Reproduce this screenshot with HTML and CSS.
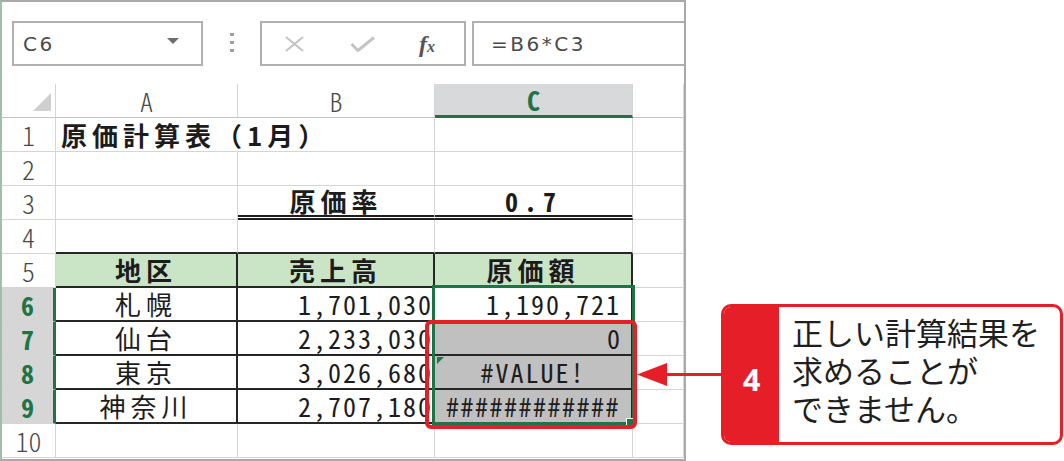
FILE: index.html
```html
<!DOCTYPE html>
<html lang="ja">
<head>
<meta charset="utf-8">
<title>原価計算表</title>
<link rel="stylesheet" href="styles.css">
</head>
<body>
<div class="page">
  <div class="sheet">
    <div class="fbar">
      <div class="namebox"><span class="ref">C6</span><span class="caret"></span></div>
      <div class="dots"><span></span><span></span><span></span></div>
      <div class="fbtns">
        <svg class="ico-x" width="21" height="16" viewBox="0 0 21 16"><path d="M2 1 L19 15 M19 1 L2 15" stroke="#c4c4c4" stroke-width="2.2" fill="none"/></svg>
        <svg class="ico-ok" width="25" height="16" viewBox="0 0 25 16"><path d="M1.5 8 L8 14.5 L24 1.5" stroke="#c4c4c4" stroke-width="3" fill="none"/></svg>
        <span class="fx">f<span class="fx-x">x</span></span>
      </div>
      <div class="finput">=B6*C3</div>
    </div>
    <div class="grid">
      <div class="c corner"><span class="tri"></span></div>
      <div class="c ch">A</div>
      <div class="c ch">B</div>
      <div class="c ch on">C</div>
      <div class="c ch"></div>

      <div class="c rh">1</div>
      <div class="c title">原価計算表（1月）</div>
      <div class="c"></div>
      <div class="c"></div>
      <div class="c"></div>

      <div class="c rh">2</div>
      <div class="c"></div>
      <div class="c"></div>
      <div class="c"></div>
      <div class="c"></div>

      <div class="c rh">3</div>
      <div class="c"></div>
      <div class="c dbl b ctr">原価率</div>
      <div class="c dbl b ctr n rate">0.7</div>
      <div class="c"></div>

      <div class="c rh">4</div>
      <div class="c tb"></div>
      <div class="c tb"></div>
      <div class="c tb"></div>
      <div class="c"></div>

      <div class="c rh">5</div>
      <div class="c t hd">地区</div>
      <div class="c t hd">売上高</div>
      <div class="c t hd">原価額</div>
      <div class="c"></div>

      <div class="c rh on">6</div>
      <div class="c t ctr">札幌</div>
      <div class="c t n r">1,701,030</div>
      <div class="c t n r pr10">1,190,721</div>
      <div class="c"></div>

      <div class="c rh on">7</div>
      <div class="c t ctr">仙台</div>
      <div class="c t n r">2,233,030</div>
      <div class="c t gr n r pr9">0</div>
      <div class="c"></div>

      <div class="c rh on">8</div>
      <div class="c t ctr">東京</div>
      <div class="c t n r">3,026,680</div>
      <div class="c t gr n ctr err">#VALUE!</div>
      <div class="c"></div>

      <div class="c rh on">9</div>
      <div class="c t ctr">神奈川</div>
      <div class="c t n r">2,707,180</div>
      <div class="c t gr n ctr hash">############</div>
      <div class="c"></div>

      <div class="c rh">10</div>
      <div class="c"></div>
      <div class="c"></div>
      <div class="c"></div>
      <div class="c"></div>
    </div>
  </div>

  <div class="selection"></div>
  <div class="handle"></div>
  <div class="errbox"></div>
  <svg class="arrow" width="86" height="26" viewBox="0 0 86 26">
    <polygon points="1,12.5 31,1 31,24" fill="#e61e28"/>
    <rect x="30" y="11" width="56" height="3" fill="#e61e28"/>
  </svg>
  <div class="callout">
    <div class="num">4</div>
    <div class="msg">
      <p class="line">正しい計算結果を</p>
      <p class="line">求めることが</p>
      <p class="line">できません。</p>
    </div>
  </div>
</div>
</body>
</html>
```

FILE: styles.css
```css
* {
  box-sizing: border-box;
  margin: 0;
  padding: 0;
}

body {
  margin: 0;
  background: #ffffff;
  width: 1064px;
  height: 461px;
  overflow: hidden;
}

.page {
  position: relative;
  width: 1064px;
  height: 461px;
}

.sheet {
  width: 686px;
  height: 461px;
  border-top: 2px solid #a9a9a9;
  border-right: 2px solid #a9a9a9;
  border-bottom: 2px solid #a9a9a9;
  border-left: 2px solid #a4bca9;
}

/* formula bar */
.fbar {
  display: flex;
  align-items: flex-start;
  height: 82px;
  padding-top: 19px;
}

.namebox {
  margin-left: 10px;
  width: 191px;
  height: 45px;
  border: 2px solid #b0b0b0;
  display: flex;
  align-items: center;
  padding-left: 9px;
  padding-right: 22px;
}

.ref,
.finput {
  font-family: "DejaVu Sans", "Liberation Sans", sans-serif;
  font-size: 20px;
  letter-spacing: 2.5px;
  color: #4a4a4a;
}

.caret {
  margin-left: auto;
  width: 0;
  height: 0;
  border-left: 6.5px solid transparent;
  border-right: 6.5px solid transparent;
  border-top: 6px solid #6e6e6e;
  position: relative;
  top: -3px;
}

.dots {
  width: 57px;
  height: 45px;
  display: flex;
  flex-direction: column;
  align-items: center;
  padding-top: 12px;
  gap: 5px;
}

.dots span {
  width: 4px;
  height: 3px;
  background: #a0a0a0;
}

.fbtns {
  width: 206px;
  height: 45px;
  border: 2px solid #b0b0b0;
  display: flex;
  align-items: center;
  padding-left: 22px;
}

.ico-ok {
  margin-left: 45px;
}

.fx {
  margin-left: 44px;
  font-family: "Liberation Serif", "Times New Roman", serif;
  font-style: italic;
  font-weight: 700;
  font-size: 24px;
  color: #555555;
  line-height: 1;
}

.fx-x {
  font-size: 16px;
}

.finput {
  flex: 1;
  margin-left: 6px;
  height: 45px;
  border: 2px solid #b0b0b0;
  border-right: none;
  display: flex;
  align-items: center;
  padding-left: 17px;
}

/* grid */
.grid {
  display: grid;
  grid-template-columns: 54px 182px 197px 198px 51px;
  grid-auto-rows: 34px;
}

.c {
  border-right: 1px solid #d5d5d5;
  border-bottom: 1px solid #d5d5d5;
  display: flex;
  align-items: center;
  justify-content: flex-start;
  white-space: nowrap;
  font-family: "Noto Sans CJK JP", "Noto Sans CJK SC", sans-serif;
  font-size: 26px;
  line-height: 1;
  color: #1c1c1c;
  letter-spacing: 5px;
  position: relative;
}

.ctr {
  justify-content: center;
}

.r {
  justify-content: flex-end;
}

.n {
  font-feature-settings: "hwid" 1;
  letter-spacing: 2px;
}

.b {
  font-weight: 700;
}

.rate {
  letter-spacing: 6px;
}

.hash {
  letter-spacing: 1.5px;
}

.corner {
  justify-content: flex-end;
  align-items: flex-end;
  border-bottom-color: #c4c4c4;
}

.tri {
  width: 0;
  height: 0;
  border-left: 18px solid transparent;
  border-bottom: 18px solid #cfcfcf;
  margin-right: 4px;
  margin-bottom: 6px;
}

.ch {
  justify-content: center;
  font-weight: 300;
  color: #4a4a4a;
  font-feature-settings: "hwid" 1;
  letter-spacing: 0;
  border-bottom-color: #c4c4c4;
}

.ch.on {
  background: #d8d9da;
  color: #217346;
  font-weight: 700;
  border-bottom: 3px solid #217346;
}

.rh {
  justify-content: center;
  font-weight: 300;
  color: #4a4a4a;
  font-feature-settings: "hwid" 1;
  letter-spacing: 0;
}

.rh.on {
  background: #d6d6d6;
  color: #217346;
  font-weight: 700;
  border-right: 3px solid #217346;
}

.title {
  padding-left: 5px;
  font-weight: 700;
  border-right-color: transparent;
}

.dbl {
  border-bottom: 5px double #1e1e1e;
}

.tb {
  border-bottom: 2px solid #262626;
}

.t {
  border-right: 2px solid #262626;
  border-bottom: 2px solid #262626;
}

.hd {
  background: #c9e5c6;
  font-weight: 700;
  justify-content: center;
}

.gr {
  background: #c0c0c0;
}

.pr10 {
  padding-right: 10px;
}

.pr9 {
  padding-right: 9px;
}

.err::before {
  content: "";
  position: absolute;
  left: 2px;
  top: 1px;
  border-top: 7px solid #217346;
  border-right: 7px solid transparent;
}

/* overlays */
.selection {
  position: absolute;
  left: 432px;
  top: 285px;
  width: 203px;
  height: 140px;
  border: 3px solid #217346;
}

.handle {
  position: absolute;
  left: 626px;
  top: 418px;
  width: 8px;
  height: 8px;
  background: #217346;
  border-left: 1px solid #ffffff;
  border-top: 1px solid #ffffff;
}

.errbox {
  position: absolute;
  left: 425px;
  top: 320px;
  width: 212px;
  height: 109px;
  border: 4px solid #e61e28;
  border-radius: 6px;
}

.arrow {
  position: absolute;
  left: 636px;
  top: 362px;
}

.callout {
  position: absolute;
  left: 721px;
  top: 304px;
  width: 342px;
  height: 141px;
  border: 3px solid #e61e28;
  border-radius: 10px;
  display: flex;
  overflow: hidden;
  background: #ffffff;
}

.num {
  width: 55px;
  background: #e61e28;
  color: #ffffff;
  display: flex;
  align-items: center;
  justify-content: center;
  padding-top: 8px;
  font-family: "Noto Sans", "Liberation Sans", sans-serif;
  font-weight: 700;
  font-size: 31px;
}

.msg {
  padding: 9px 0 0 13px;
  display: flex;
  flex-direction: column;
  gap: 6px;
  font-family: "Noto Sans CJK JP", "Noto Sans CJK SC", sans-serif;
  font-size: 31px;
  line-height: 32px;
  color: #1f1f1f;
}
```
